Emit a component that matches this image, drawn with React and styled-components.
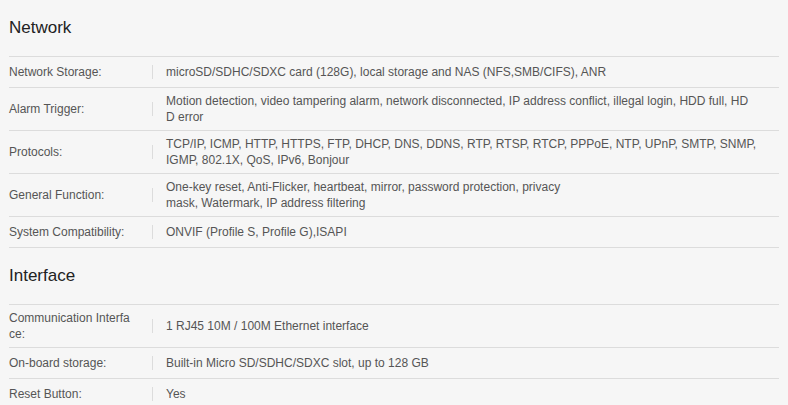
import styled, { createGlobalStyle } from "styled-components";

const GlobalStyle = createGlobalStyle`
  html, body {
    margin: 0;
    padding: 0;
    background: #f6f6f6;
  }
  body {
    font-family: "Liberation Sans", Arial, sans-serif;
  }
`;

const Page = styled.div`
  padding: 0 9px;
  width: 770px;
`;

const Heading = styled.h2`
  margin: 18px 0;
  font-size: 17px;
  line-height: 20px;
  font-weight: normal;
  color: #222;
`;

const Table = styled.div`
  border-top: 1px solid #dcdcdc;
`;

const Row = styled.div`
  display: flex;
  align-items: center;
  padding: 5px 0;
  min-height: 20px;
  border-bottom: 1px solid #dcdcdc;
  font-size: 12px;
  line-height: 16px;
  color: #555;
`;

const Label = styled.div`
  width: 143px;
  flex-shrink: 0;
  padding-right: 18px;
  box-sizing: border-box;
  word-break: break-all;
`;

const Divider = styled.span`
  width: 1px;
  height: 14px;
  background: #dcdcdc;
  flex-shrink: 0;
`;

const Value = styled.div`
  flex: 1;
  padding-left: 13px;
`;

const network = [
  ["Network Storage:", ["microSD/SDHC/SDXC card (128G), local storage and NAS (NFS,SMB/CIFS), ANR"]],
  ["Alarm Trigger:", ["Motion detection, video tampering alarm, network disconnected, IP address conflict, illegal login, HDD full, HD", "D error"]],
  ["Protocols:", ["TCP/IP, ICMP, HTTP, HTTPS, FTP, DHCP, DNS, DDNS, RTP, RTSP, RTCP, PPPoE, NTP, UPnP, SMTP, SNMP,", "IGMP, 802.1X, QoS, IPv6, Bonjour"]],
  ["General Function:", ["One-key reset, Anti-Flicker, heartbeat, mirror, password protection, privacy", "mask, Watermark, IP address filtering"]],
  ["System Compatibility:", ["ONVIF (Profile S, Profile G),ISAPI"]],
];

const iface = [
  ["Communication Interface:", ["1 RJ45 10M / 100M Ethernet interface"]],
  ["On-board storage:", ["Built-in Micro SD/SDHC/SDXC slot, up to 128 GB"]],
  ["Reset Button:", ["Yes"]],
];

const SpecTable = ({ rows }) => (
  <Table>
    {rows.map(([label, lines]) => (
      <Row key={label}>
        <Label>{label}</Label>
        <Divider />
        <Value>
          {lines.map((l, i) => (
            <div key={i}>{l}</div>
          ))}
        </Value>
      </Row>
    ))}
  </Table>
);

export default function App() {
  return (
    <Page>
      <GlobalStyle />
      <Heading>Network</Heading>
      <SpecTable rows={network} />
      <Heading>Interface</Heading>
      <SpecTable rows={iface} />
    </Page>
  );
}
